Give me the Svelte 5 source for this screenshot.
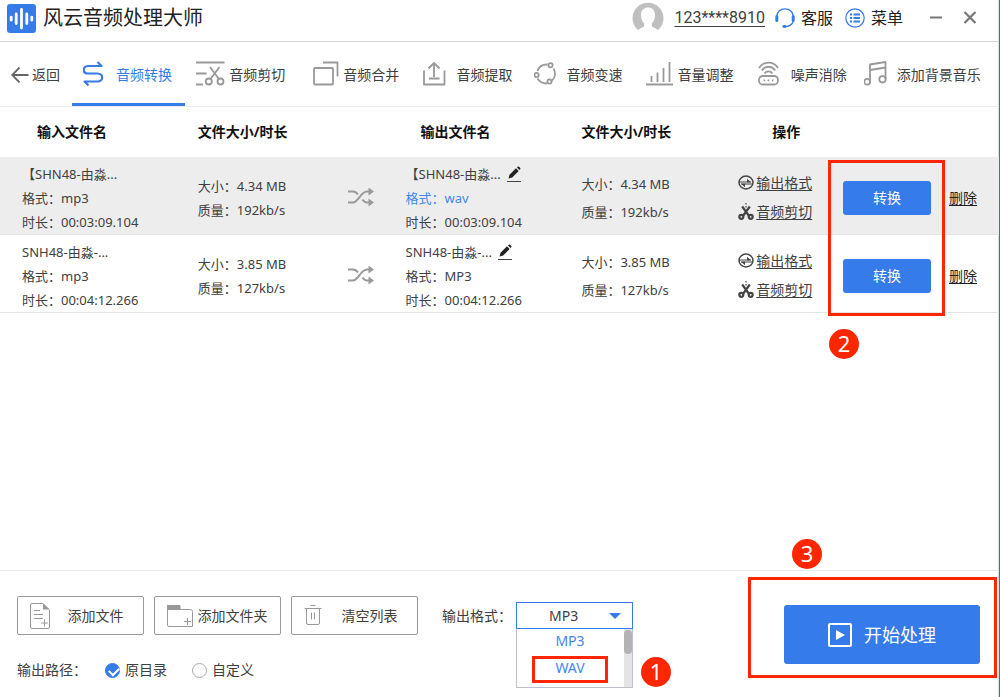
<script>
  const tabs = [
    { id: 'convert', label: '音频转换' },
    { id: 'cut', label: '音频剪切' },
    { id: 'merge', label: '音频合并' },
    { id: 'extract', label: '音频提取' },
    { id: 'speed', label: '音频变速' },
    { id: 'volume', label: '音量调整' },
    { id: 'noise', label: '噪声消除' },
    { id: 'music', label: '添加背景音乐' }
  ];
  let active = $state('convert');

  const files = [
    { name: '【SHN48-由淼...', input: 'mp3', time: '00:03:09.104', size: '4.34 MB', rate: '192kb/s', output: 'wav', changed: true },
    { name: 'SNH48-由淼-...', input: 'mp3', time: '00:04:12.266', size: '3.85 MB', rate: '127kb/s', output: 'MP3', changed: false }
  ];

  let format = $state('MP3');
  let target = $state('source');
</script>

<div class="window">
  <header class="titlebar">
    <svg class="logo" viewBox="0 0 29 29" aria-hidden="true">
      <rect width="29" height="29" rx="3" fill="#357bea" />
      <g stroke="#fff" stroke-width="2.8" stroke-linecap="round">
        <path d="M4.200 13.200v3M9.200 10v9.500M14.500 5.500v18.500M19.800 10v9.500M24.800 13.200v3" />
      </g>
    </svg>
    <h1>风云音频处理大师</h1>
    <svg class="avatar" viewBox="0 0 32 32" aria-hidden="true">
      <path d="M6 28A15.500 15.500 0 1 1 26 28C24.500 26.500 21.500 25.500 19.800 24.500V21.500C22 19.500 23 16.500 23 13C23 8 20 5.500 16 5.500S9 8 9 13C9 16.500 10 19.500 12.200 21.500V24.500C10.500 25.500 7.500 26.500 6 28Z" fill="#bfbfbf" />
    </svg>
    <a class="account" href="#account">123****8910</a>
    <button class="tool service">
      <svg viewBox="0 0 20 20" width="20" height="20" aria-hidden="true" fill="none" stroke="#357bea">
        <path d="M1.800 8C2.500 3.500 5.800 .9 10 .9s7.500 2.600 8.200 7.100" stroke-width="1.300" />
        <path d="M1.800 8.500v4M18.200 8.500v4" stroke-width="3" stroke-linecap="round" />
        <path d="M18.200 13c-.8 3.200-3.500 5.200-7.200 5.600" stroke-width="1.200" />
        <ellipse cx="9.500" cy="18.500" rx="2.200" ry="1.400" fill="#357bea" stroke="none" />
      </svg>
      客服
    </button>
    <button class="tool menu">
      <svg viewBox="0 0 20 20" width="20" height="20" aria-hidden="true" fill="none" stroke="#357bea">
        <circle cx="10" cy="10" r="9.200" stroke-width="1.200" />
        <path d="M5 6.500h2M5 10h2M5 13.500h2M8.500 6.500H15M8.500 10H15M8.500 13.500H15" stroke-width="1.800" />
      </svg>
      菜单
    </button>
    <button class="control" aria-label="最小化">
      <svg viewBox="0 0 14 14" width="14" height="14"><path d="M1 6.500h12" stroke="#777" stroke-width="2" /></svg>
    </button>
    <button class="control close" aria-label="关闭">
      <svg viewBox="0 0 14 14" width="14" height="14"><path d="M1.500 1l11 11M12.500 1l-11 11" stroke="#777" stroke-width="2.200" /></svg>
    </button>
  </header>

  <nav>
    <button class="back">
      <svg viewBox="0 0 18 16" width="18" height="16" aria-hidden="true" fill="none" stroke="#666" stroke-width="1.800">
        <path d="M8.500 .5L1.200 8l7.300 7.500M1.200 8H17.500" />
      </svg>
      返回
    </button>
    {#each tabs as tab}
      <button class="tab" class:active={active === tab.id} onclick={() => (active = tab.id)}>
        <svg viewBox="0 0 30 30" width="30" height="30" aria-hidden="true" fill="none" stroke="currentColor" stroke-width="1.800" stroke-linejoin="round">
          {#if tab.id === 'convert'}
            <path d="M14.500 2l4 4H4.800C-.6 6-.6 13.500 4.800 13.500H14.500c6.200 0 6.200 8 0 8H1.500l4 4" stroke-width="2.200" />
          {:else if tab.id === 'cut'}
            <path d="M0 2.500h28.500M0 13.500h10.500M0 24.500h7M14 7l9 12M23.500 7l-9 12" />
            <circle cx="12.800" cy="21.500" r="3" /><circle cx="24.500" cy="21.500" r="3" />
          {:else if tab.id === 'merge'}
            <rect x="4" y="8" width="19" height="16.500" rx="1" /><path d="M13 2.500h14.500v14" />
          {:else if tab.id === 'extract'}
            <path d="M1 10.500V24.500h20.500V10.500M11 17V3M5.500 8.500L11 3l5.500 5.500M6 18.500h10.500" />
          {:else if tab.id === 'speed'}
            <path d="M3.500 11C5 6.500 8.500 4.300 13.500 4.500M19.500 8.500c2.500 4 2 9-1.500 12M3.500 18.500c2 3.500 5.500 5 9.500 5" />
            <circle cx="2.600" cy="15" r="2.100" /><circle cx="16.500" cy="5.200" r="2.100" /><circle cx="15.500" cy="21.500" r="2.100" />
          {:else if tab.id === 'volume'}
            <path d="M1 24.500h27M6.500 22v-6M12.500 22v-9.500M18.500 22V8M24.500 22V2" />
          {:else if tab.id === 'noise'}
            <rect x="1" y="16" width="19" height="8.500" rx="3.800" />
            <path d="M1 8C5.500 .8 15.500 .8 20 8M3.800 10.500c3.500-5 9.900-5 13.400 0M6.500 13.500c2-2.800 6-2.800 8 0" />
            <path d="M5.500 20.300h1.500M9.700 20.300h1.500M14 20.300h1.500" />
          {:else}
            <path d="M6 21.500V4.500L21.500 2v17M6 10L21.500 7.500" />
            <circle cx="3.200" cy="21.800" r="2.900" /><circle cx="18.500" cy="19.300" r="3.200" />
          {/if}
        </svg>
        {tab.label}
      </button>
    {/each}
  </nav>

  <main>
    <table>
      <colgroup>
        <col class="c-name" /><col class="c-size" /><col class="c-swap" /><col class="c-out" />
        <col class="c-outsize" /><col class="c-links" /><col class="c-run" /><col />
      </colgroup>
      <thead>
        <tr>
          <th class="indent first">输入文件名</th>
          <th>文件大小/时长</th>
          <th></th>
          <th class="indent">输出文件名</th>
          <th>文件大小/时长</th>
          <th class="ops">操作</th>
          <th></th>
          <th></th>
        </tr>
      </thead>
      <tbody>
        {#each files as file, i}
          <tr class:selected={i === 0}>
            <td class="first">
              <p>{file.name}</p>
              <p>格式：{file.input}</p>
              <p>时长：{file.time}</p>
            </td>
            <td><p>大小：{file.size}</p><p>质量：{file.rate}</p></td>
            <td>
              <svg class="swap" viewBox="0 0 26 20" width="26" height="20" aria-hidden="true" fill="none" stroke="#999" stroke-width="2">
                <path d="M0 3.500h5c2 0 3.500 1 5 3M0 14.500h5c5 0 8-11 14-11h4M14.500 11.500c1.300 2 2.800 3 4.500 3h4" />
                <path d="M20.500 -.5l5.500 4-5.500 4zM20.500 10.500l5.500 4-5.500 4z" fill="#999" stroke="none" />
              </svg>
            </td>
            <td>
              <p>
                {file.name}
                <button class="edit" aria-label="重命名">
                  <svg viewBox="0 0 14 16" width="14" height="16">
                    <path d="M1.500 12.500l1-3.700L9 2.300l2.700 2.600-6.500 6.500zM10 1.400l1-.9c.7-.5 3 1.500 2.400 2.400l-.9 1z" fill="#222" />
                    <path d="M0 15.500h14" stroke="#444" />
                  </svg>
                </button>
              </p>
              <p class:changed={file.changed}>格式：{file.output}</p>
              <p>时长：{file.time}</p>
            </td>
            <td class="loose"><p>大小：{file.size}</p><p>质量：{file.rate}</p></td>
            <td class="links">
              <a href="#format">
                <svg viewBox="0 0 16 16" width="16" height="16" aria-hidden="true" fill="none" stroke="#444" stroke-width="1.500">
                  <ellipse cx="8" cy="7.500" rx="7" ry="6.400" />
                  <path d="M1 7h12M3 9h12" stroke-width="1.200" />
                  <path d="M9 3.800L13 7.200H9zM7 12.200L3 8.800h4z" fill="#444" stroke="none" />
                </svg>
                <span>输出格式</span>
              </a>
              <a href="#cut">
                <svg viewBox="0 0 16 18" width="16" height="18" aria-hidden="true" fill="none" stroke="#444" stroke-width="2.200">
                  <path d="M4.200 3.500l6.500 9M11.800 3.500l-6.500 9" /><path d="M8 0v1.500M8 3v1.500" stroke-width="1.200" />
                  <circle cx="3.300" cy="13.800" r="2" /><circle cx="12.700" cy="13.800" r="2" />
                </svg>
                <span>音频剪切</span>
              </a>
            </td>
            <td><button class="run">转换</button></td>
            <td><a class="delete" href="#delete">删除</a></td>
          </tr>
        {/each}
      </tbody>
    </table>
    <div class="mark run-mark"></div>
    <span class="badge run-badge">2</span>
  </main>

  <footer>
    <div class="settings">
      <div class="row">
        <button class="add">
          <svg viewBox="0 0 20 26" width="20" height="26" aria-hidden="true" fill="none" stroke="#999">
            <path d="M13 .5H2A1.500 1.500 0 0 0 .5 2v22A1.500 1.500 0 0 0 2 25.500h16a1.500 1.500 0 0 0 1.500-1.500V7M4 7.500h6M4 11.500h9M4 15.500h9M14.500 16.500v7M11 20h7" />
            <path d="M13 0v6.500h7z" fill="#999" stroke="none" />
          </svg>
          <span>添加文件</span>
        </button>
        <button class="add folder">
          <svg viewBox="0 0 26 22" width="26" height="22" aria-hidden="true" fill="none" stroke="#999">
            <path d="M.5 4.500h23a2 2 0 0 1 2 2V21.500H2A1.500 1.500 0 0 1 .5 20zM20.500 13v7M17 16.500h7" />
            <path d="M0 5V0h12.500q1 0 1 1v4z" fill="#999" stroke="none" />
          </svg>
          <span>添加文件夹</span>
        </button>
        <button class="add">
          <svg viewBox="0 0 20 24" width="20" height="24" aria-hidden="true" fill="none" stroke="#999">
            <path d="M6.500 1.500h5M.5 4.500h17M2.500 4.500V19a1.500 1.500 0 0 0 1.500 1.500h10a1.500 1.500 0 0 0 1.500-1.500V4.500M7.500 8.500v7M10.500 8.500v7" />
          </svg>
          <span>清空列表</span>
        </button>
        <label class="format-label" for="format">输出格式：</label>
        <div class="picker">
          <select id="format" bind:value={format}>
            <option>MP3</option>
            <option>WAV</option>
          </select>
          <svg class="caret" viewBox="0 0 12 6" width="12" height="6" aria-hidden="true"><path d="M0 0h12L6 6z" fill="#357bea" /></svg>
          <div class="list">
            <button onclick={() => (format = 'MP3')}>MP3</button>
            <button class="marked" onclick={() => (format = 'WAV')}>WAV</button>
            <div class="thumb"></div>
          </div>
          <span class="badge format-badge">1</span>
        </div>
      </div>
      <div class="row path">
        <span class="path-label">输出路径：</span>
        <label><input type="radio" name="target" value="source" bind:group={target} />原目录</label>
        <label><input type="radio" name="target" value="custom" bind:group={target} />自定义</label>
      </div>
    </div>
    <div class="start-area">
      <button class="start">
        <svg viewBox="0 0 24 24" width="24" height="24" aria-hidden="true">
          <rect x="1" y="1" width="22" height="22" rx="1" fill="none" stroke="#fff" stroke-width="2" />
          <path d="M8 7l9 5-9 5z" fill="#fff" />
        </svg>
        开始处理
      </button>
      <div class="mark start-mark"></div>
      <span class="badge start-badge">3</span>
    </div>
  </footer>
</div>

<style>
  :global(body) {
    margin: 0;
    background: #fff;
  }
  * {
    box-sizing: border-box;
  }
  .window {
    display: flex;
    flex-direction: column;
    min-height: 100vh;
    border-right: 1px solid #4d6f98;
    box-shadow: inset -1px 0 #ddd;
    font-family: 'Noto Sans', 'Noto Sans CJK SC', sans-serif;
    font-size: 14px;
    line-height: 20px;
    color: #404040;
  }
  button {
    display: flex;
    align-items: center;
    padding: 0;
    border: 0;
    background: none;
    font: inherit;
    color: inherit;
    white-space: nowrap;
    cursor: pointer;
  }
  svg {
    flex: none;
    display: block;
  }
  a {
    color: inherit;
  }

  .titlebar {
    display: flex;
    align-items: center;
    padding: 2px 22px 7px 7px;
    border-bottom: 1px solid #d6d6d6;
  }
  .logo {
    width: 29px;
    height: 29px;
    margin-right: 7px;
  }
  h1 {
    flex: 1;
    margin: 0;
    font-size: 20px;
    line-height: 28px;
    font-weight: 400;
    color: #222;
  }
  .avatar {
    width: 32px;
    height: 32px;
    margin-right: 10px;
  }
  .account {
    margin-right: 10px;
    font-family: Roboto, sans-serif;
    font-size: 16px;
    text-underline-offset: 3px;
  }
  .tool {
    gap: 6px;
    font-size: 16px;
    color: #222;
  }
  .menu {
    margin: 0 26px 0 12px;
  }
  .close {
    margin-left: 20px;
  }

  nav {
    display: grid;
    grid-template-columns: 72fr 113fr 114fr 113fr 110fr 111fr 113fr 106fr 146fr;
    height: 65px;
    border-bottom: 1px solid #ececec;
  }
  nav button {
    gap: 3px;
    padding: 2px 0 0 11px;
  }
  .tab svg {
    color: #999;
  }
  .active,
  .active svg {
    color: #357bea;
  }
  .active {
    box-shadow: inset 0 -3px #357bea;
  }

  main {
    flex: 1;
    position: relative;
  }
  table {
    width: 100%;
    table-layout: fixed;
    border-spacing: 0;
    font-size: 13px;
  }
  .c-name { width: 19.8%; }
  .c-size { width: 15%; }
  .c-swap { width: 5.8%; }
  .c-out { width: 17.6%; }
  .c-outsize { width: 15.7%; }
  .c-links { width: 10.5%; }
  .c-run { width: 10.6%; }
  th {
    height: 50px;
    padding: 0;
    font-size: 14px;
    text-align: left;
    color: #111;
  }
  .indent {
    padding-left: 15px;
  }
  .ops {
    padding-left: 34px;
  }
  td {
    height: 78px;
    padding: 4px 0 0;
    border-bottom: 1px solid #e4e4e4;
    white-space: nowrap;
  }
  td.first {
    padding-left: 22px;
  }
  th.first {
    padding-left: 37px;
  }
  .selected {
    background: #ededed;
  }
  p {
    display: flex;
    align-items: center;
    gap: 6px;
    margin: 0;
    line-height: 24px;
  }
  .loose p {
    line-height: 28px;
  }
  .changed {
    color: #4486f0;
  }
  .links a {
    display: flex;
    align-items: center;
    gap: 2px;
    height: 29px;
    font-size: 14px;
    text-decoration: none;
  }
  .links span {
    text-decoration: underline;
    text-underline-offset: 2px;
  }
  .run {
    justify-content: center;
    width: 88px;
    height: 34px;
    border-radius: 3px;
    background: #357bea;
    color: #fff;
    font-size: 14px;
  }
  .delete {
    font-size: 14px;
    color: #222;
    text-underline-offset: 2px;
  }

  .mark {
    position: absolute;
    border: 3px solid #ff2600;
    pointer-events: none;
  }
  .badge {
    position: absolute;
    width: 30px;
    height: 30px;
    border-radius: 50%;
    background: #ff2600;
    color: #fff;
    font-size: 22px;
    line-height: 28px;
    text-align: center;
  }
  .run-mark {
    top: 53px;
    left: 82.9%;
    width: 11.7%;
    height: 156px;
  }
  .run-badge {
    top: 222px;
    left: 83%;
  }

  footer {
    display: flex;
    justify-content: space-between;
    align-items: flex-start;
    padding: 25px 19px 17px 17px;
    border-top: 1px solid #e8e8e8;
  }
  .settings {
    display: flex;
    flex-direction: column;
    gap: 25px;
  }
  .row {
    display: flex;
    align-items: center;
    gap: 10px;
  }
  .add {
    width: 127px;
    height: 39px;
    padding: 0 12px;
    border: 1px solid #999;
    border-radius: 2px;
  }
  .add span {
    flex: 1;
    padding-left: 10px;
    text-align: center;
  }
  .folder span {
    padding-left: 4px;
  }
  .format-label {
    margin-left: 14px;
  }
  .picker {
    position: relative;
    width: 117px;
    margin-left: -6px;
  }
  select {
    display: block;
    width: 100%;
    height: 27px;
    padding: 0 32px;
    border: 1px solid #357bea;
    border-radius: 0;
    background: #fff;
    appearance: none;
    font: inherit;
    color: inherit;
  }
  .caret {
    position: absolute;
    top: 11px;
    right: 12px;
    pointer-events: none;
  }
  .list {
    position: absolute;
    top: 100%;
    left: 0;
    width: 100%;
    padding: 0 24px 4px 15px;
    border: 1px solid #c0c0cc;
    border-top: 0;
    background: linear-gradient(#e4e4e4, #e4e4e4) right / 8px 100% no-repeat #fff;
  }
  .list button {
    justify-content: center;
    width: 100%;
    height: 27px;
    padding-bottom: 4px;
    color: #4486f0;
  }
  .list .marked {
    border: 3px solid #ff2600;
  }
  .thumb {
    position: absolute;
    top: 1px;
    right: 0;
    width: 8px;
    height: 24px;
    border-radius: 4px;
    background: #b3b3b3;
  }
  .format-badge {
    top: 55px;
    left: 125px;
  }
  .path {
    gap: 25px;
  }
  .path-label {
    margin-right: -7px;
  }
  .path label {
    display: flex;
    align-items: center;
    gap: 5px;
  }
  input {
    position: relative;
    width: 15px;
    height: 15px;
    margin: 0;
    border: 1px solid #aaa;
    border-radius: 50%;
    appearance: none;
  }
  input:checked {
    border-color: #357bea;
    background: #357bea;
  }
  input:checked::after {
    content: '';
    position: absolute;
    top: 3px;
    left: 3px;
    width: 8px;
    height: 5px;
    border: solid #fff;
    border-width: 0 0 2px 2px;
    transform: rotate(-45deg);
  }

  .start-area {
    position: relative;
    margin-top: 9px;
  }
  .start {
    justify-content: center;
    gap: 12px;
    width: 196px;
    height: 59px;
    border-radius: 3px;
    background: #357bea;
    color: #fff;
    font-size: 18px;
  }
  .start-mark {
    inset: -28px -17px -14px -36px;
  }
  .start-badge {
    top: -66px;
    left: 8px;
  }
</style>
